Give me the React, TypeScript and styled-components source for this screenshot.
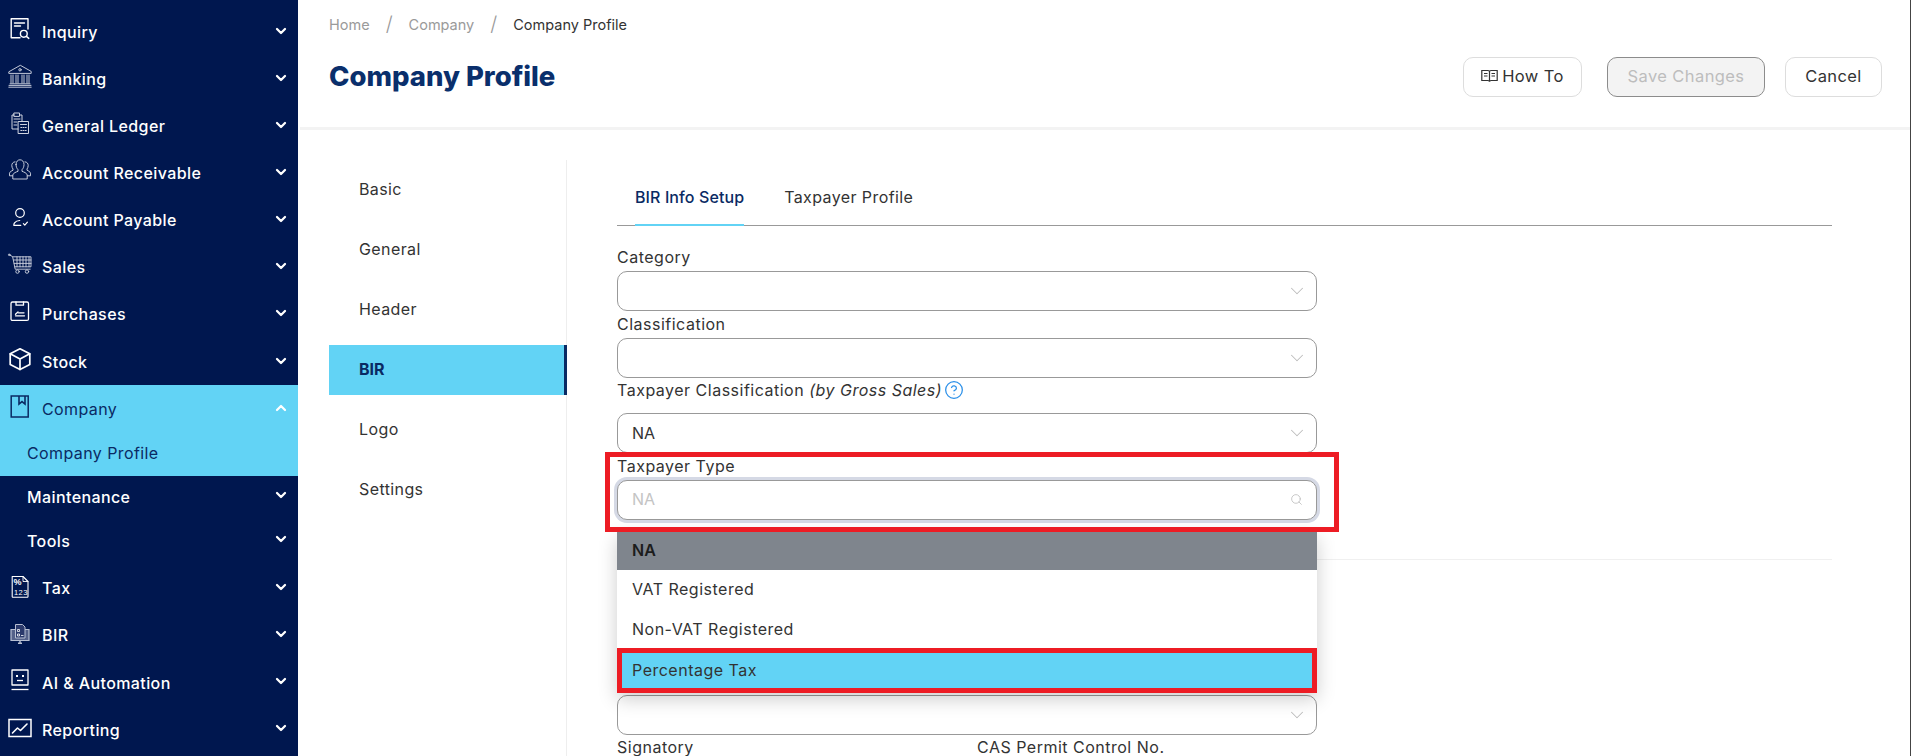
import { ReactNode } from 'react';
import styled, { createGlobalStyle } from 'styled-components';
import { ChevronDown, ChevronUp, CircleHelp, Search } from 'lucide-react';

const GlobalStyle = createGlobalStyle`
  html, body {
    margin: 0;
    padding: 0;
    background: #fff;
    font-family: Inter, 'Noto Sans', sans-serif;
    color: #333;
  }
`;

const Shell = styled.div`
  display: flex;
  width: 1912px;
  height: 756px;
  overflow: hidden;
`;

const Sidebar = styled.nav`
  flex: 0 0 298px;
  padding-top: 8px;
  background: #00174f;
`;

const MenuRow = styled.div<{ $active?: boolean }>`
  display: flex;
  align-items: center;
  height: 47px;
  padding: 0 9px 0 8px;
  background: ${(p) => (p.$active ? '#62d3f5' : 'transparent')};
  color: ${(p) => (p.$active ? '#0a2a63' : '#fff')};
  font-size: 16px;
  font-weight: ${(p) => (p.$active ? 400 : 500)};
  letter-spacing: 0.4px;
`;

const SubRow = styled.div<{ $active?: boolean }>`
  display: flex;
  align-items: center;
  box-sizing: border-box;
  height: 44px;
  padding: 0 9px 4px 27px;
  background: ${(p) => (p.$active ? '#62d3f5' : 'transparent')};
  color: ${(p) => (p.$active ? '#0a2a63' : '#fff')};
  font-size: 16px;
  font-weight: ${(p) => (p.$active ? 400 : 500)};
  letter-spacing: 0.4px;
`;

const TopMenu = styled.div`
  ${MenuRow}:last-child {
    margin-top: 1px;
  }
`;

const BottomMenu = styled.div`
  ${MenuRow} {
    height: 47.25px;
  }
`;

const IconSlot = styled.span`
  flex: 0 0 24px;
  width: 24px;
  height: 24px;
  margin: 0 10px 4px 0;

  svg {
    display: block;
  }
`;

const MenuLabel = styled.span`
  flex: 1;
  line-height: 1;
  padding-top: 1px;
`;

const Chevron = styled.span`
  display: flex;
  color: #fff;
  margin-bottom: 2px;
`;

const Main = styled.main`
  flex: 1;
  min-width: 0;
  margin: 0 1px 0 2px;
  border-right: 1px solid #444;
`;

const Header = styled.header`
  display: flex;
  justify-content: space-between;
  box-sizing: border-box;
  height: 130px;
  padding: 0 28px 0 29px;
  border-bottom: 3px solid #f3f3f3;
`;

const Breadcrumb = styled.div`
  display: flex;
  align-items: center;
  height: 16px;
  margin-top: 16px;
  font-size: 14.5px;
`;

const Crumb = styled.span<{ $current?: boolean }>`
  color: ${(p) => (p.$current ? '#333' : '#9a9a9a')};
`;

const CrumbSlash = styled.span`
  margin: 0 16px;
  color: #999;
  font-size: 20px;
  font-weight: 300;
`;

const Title = styled.h1`
  margin: 27px 0 0;
  color: #0a2f6c;
  font-size: 27.5px;
  line-height: 34px;
  font-weight: 800;
`;

const Actions = styled.div`
  display: flex;
  margin-top: 57px;
`;

const Button = styled.button<{ $disabled?: boolean }>`
  display: flex;
  align-items: center;
  justify-content: center;
  gap: 4px;
  box-sizing: border-box;
  height: 40px;
  padding: 0 0 2px;
  border: 1px solid ${(p) => (p.$disabled ? '#8c8c8c' : '#ddd')};
  border-radius: 10px;
  background: ${(p) => (p.$disabled ? '#f3f3f3' : '#fff')};
  color: ${(p) => (p.$disabled ? '#bdbdbd' : '#333')};
  font-family: inherit;
  font-size: 16.5px;
  letter-spacing: 0.4px;
`;

const HowToButton = styled(Button)`
  width: 119px;
  margin-right: 25px;
`;

const SaveButton = styled(Button)`
  width: 158px;
  margin-right: 20px;
`;

const CancelButton = styled(Button)`
  width: 97px;
`;

const Body = styled.div`
  display: flex;
  padding: 30px 0 0 29px;
`;

const SideNav = styled.div`
  display: flex;
  flex-direction: column;
  gap: 10px;
  flex: 0 0 238px;
  box-sizing: border-box;
  height: 600px;
  padding-top: 5px;
  border-right: 1px solid #eee;
`;

const SideItem = styled.div<{ $active?: boolean }>`
  display: flex;
  align-items: center;
  box-sizing: border-box;
  height: 50px;
  margin-right: ${(p) => (p.$active ? '-1px' : '0')};
  padding: 0 0 2px 30px;
  background: ${(p) => (p.$active ? '#62d3f5' : 'transparent')};
  border-right: ${(p) => (p.$active ? '3px solid #0a2a63' : '0')};
  color: ${(p) => (p.$active ? '#0a2a63' : '#333')};
  font-size: 16px;
  letter-spacing: ${(p) => (p.$active ? 0 : 0.4)}px;
  font-weight: ${(p) => (p.$active ? 700 : 400)};
`;

const Content = styled.div`
  flex: 0 0 1215px;
  margin-left: 50px;
`;

const Tabs = styled.div`
  display: flex;
  gap: 40px;
  box-sizing: border-box;
  height: 66px;
  padding: 26px 0 0 18px;
  border-bottom: 1px solid #999;
`;

const Tab = styled.div<{ $active?: boolean }>`
  box-sizing: border-box;
  height: 40px;
  line-height: 23px;
  font-size: 16px;
  letter-spacing: ${(p) => (p.$active ? 0.1 : 0.4)}px;
  font-weight: ${(p) => (p.$active ? 500 : 400)};
  color: ${(p) => (p.$active ? '#0a2a63' : '#333')};
  border-bottom: ${(p) => (p.$active ? '2px solid #62d3f5' : '0')};
`;

const Form = styled.div`
  padding-top: 18px;
`;

const Field = styled.div`
  position: relative;
  width: 700px;
`;

const Label = styled.label<{ $tall?: boolean }>`
  display: flex;
  align-items: flex-start;
  gap: 2px;
  height: ${(p) => (p.$tall ? 35 : 27)}px;
  line-height: ${(p) => (p.$tall ? 25 : 27)}px;
  font-size: 16px;
  letter-spacing: 0.5px;
  color: #333;

  em {
    font-style: italic;
  }

  svg {
    margin-top: 2px;
    color: #2a8fe8;
  }
`;

const BottomLabel = styled.label`
  display: block;
  height: 18px;
  margin-top: 3px;
  line-height: 18px;
  font-size: 16px;
  letter-spacing: 0.5px;
  color: #333;
`;

const SelectBox = styled.div<{ $focused?: boolean }>`
  display: flex;
  align-items: center;
  justify-content: space-between;
  box-sizing: border-box;
  height: 40px;
  padding: 0 14px ${(p) => (p.$focused ? 2 : 0)}px;
  border: 1px solid #999;
  border-radius: 10px;
  background: #fff;
  font-size: 16px;
  color: ${(p) => (p.$focused ? '#c4c4c4' : '#333')};
  box-shadow: ${(p) => (p.$focused ? '0 0 0 3px #d5d9e5' : 'none')};

  svg {
    color: #bdbdbd;
    margin-right: ${(p) => (p.$focused ? -1 : -6)}px;
  }
`;

const Divider = styled.div`
  height: 1px;
  margin-top: 39px;
  background: #f0f0f0;
`;

const LowerSelect = styled(Field)`
  margin-top: 135px;
`;

const LabelRow = styled.div`
  display: grid;
  grid-template-columns: 360px 360px;
`;

const HighlightFrame = styled.div`
  position: absolute;
  top: -1px;
  right: -22px;
  bottom: -12px;
  left: -12px;
  border: 5px solid #ed1c24;
  pointer-events: none;
  z-index: 3;
`;

const Dropdown = styled.div`
  position: absolute;
  top: calc(100% + 12px);
  left: 0;
  right: 0;
  z-index: 2;
  background: #fff;
  box-shadow: 0 6px 18px rgba(0, 0, 0, 0.2);
`;

const Option = styled.div<{ $selected?: boolean; $marked?: boolean }>`
  display: flex;
  align-items: center;
  box-sizing: border-box;
  height: ${(p) => (p.$selected ? 38 : p.$marked ? 45 : 40)}px;
  margin-top: ${(p) => (p.$marked ? -2 : 0)}px;
  padding: 0 0 2px ${(p) => (p.$marked ? 10 : 15)}px;
  background: ${(p) => (p.$selected ? '#7f858d' : p.$marked ? '#62d3f5' : '#fff')};
  border: ${(p) => (p.$marked ? '5px solid #ed1c24' : '0')};
  color: ${(p) => (p.$selected ? '#1c1c1c' : '#333')};
  font-size: 16px;
  letter-spacing: ${(p) => (p.$selected ? 0 : 0.5)}px;
  font-weight: ${(p) => (p.$selected ? 600 : 400)};
`;

const line = { fill: 'none', stroke: 'currentColor', strokeLinecap: 'round', strokeLinejoin: 'round' } as const;

const Svg = ({ children, color = '#fff' }: { children: ReactNode; color?: string }) => (
  <svg width="24" height="24" viewBox="0 0 24 24" style={{ color, overflow: 'visible' }}>
    {children}
  </svg>
);

const icons: Record<string, ReactNode> = {
  inquiry: (
    <Svg>
      <g {...line} strokeWidth="1.4">
        <path d="M20 11V.8H3.2v19h8.8" />
        <path d="M6.5 5h10M6.5 8h6" />
        <circle cx="15.8" cy="15.8" r="3.4" />
        <path d="M18.4 18.4l2.4 2" />
      </g>
    </Svg>
  ),
  banking: (
    <Svg color="#d8dce6">
      <g {...line} strokeWidth="0.9">
        <path d="M12 .5L.8 6.8v1.6h22.4V6.8z" />
        <circle cx="12" cy="4.8" r="1.2" />
        <path d="M3 10v8M5 10v8M8 10v8M10 10v8M14 10v8M16 10v8M19 10v8M21 10v8" />
        <path d="M2 18.8h20M1 20.4h22M.8 22.2h22.4" />
      </g>
    </Svg>
  ),
  ledger: (
    <Svg color="#cfd4e0">
      <g {...line} strokeWidth="1">
        <path d="M10 17H4V3h2.2M11.5 3H14v6" />
        <rect x="6.2" y="1" width="5.3" height="3.4" />
        <path d="M6 7h6M6 10h3M6 13h3" />
        <rect x="10.5" y="9.5" width="10" height="12" />
        <path d="M12.5 12.5h6M12.8 15.5h1M15 15.5h1M17.2 15.5h1M12.8 18.5h1M15 18.5h1M17.2 18.5h1" />
      </g>
    </Svg>
  ),
  receivable: (
    <Svg color="#d8dce6">
      <g {...line} strokeWidth="0.9">
        <path d="M8 5.5C8 2.5 9.8.8 12 .8s4 1.7 4 4.7c0 2.4-1 4.2-2 5.2v1.6c2 .8 4.6 1.6 5.2 3.6V20H4.8v-4.1c.6-2 3.2-2.8 5.2-3.6v-1.6C9 9.7 8 7.9 8 5.5z" />
        <path d="M7 2.8C4.8 3 3.8 4.6 3.8 6.6c0 1.4.6 2.6 1.2 3.4v1.2C3.6 12 1.8 12.6 1.5 14.2v2.6h3M17 2.8c2.2.2 3.2 1.8 3.2 3.8 0 1.4-.6 2.6-1.2 3.4v1.2c1.4.8 3.2 1.4 3.5 3v2.6h-3" />
      </g>
    </Svg>
  ),
  payable: (
    <Svg>
      <g {...line} strokeWidth="1.2">
        <circle cx="12" cy="7" r="4.3" />
        <path d="M5.8 19.3c0-1 .1-1.6.7-2.4 1.2-1.6 3-2.4 5.2-2.4M5.8 19.3h7" />
        <path d="M15.4 17.6l1.4 1.5 2.6-3" />
      </g>
    </Svg>
  ),
  sales: (
    <Svg color="#cfd4e0">
      <g {...line} strokeWidth="0.9">
        <circle cx="1.2" cy="1.8" r="0.8" />
        <path d="M2 2.2l2.6 1.4 2.6 12.6h15" />
        <path d="M5 3.8h18v10H6.8M9 3.8v10M12 3.8v10M15 3.8v10M18 3.8v10M21 3.8v10M5.6 7h17.4M6.2 10.4h16.8" />
        <circle cx="9.5" cy="18.6" r="1.7" />
        <circle cx="19" cy="18.6" r="1.7" />
      </g>
    </Svg>
  ),
  purchases: (
    <Svg>
      <g {...line} strokeWidth="1.3">
        <rect x="3" y="2" width="17.5" height="18.4" rx="1.5" />
        <path d="M8 2v3.2h7.5V2" />
        <path d="M7.5 15.8h9M10.5 12.8H16" />
        <path d="M7.5 14.2l2.5-2.2" />
      </g>
    </Svg>
  ),
  stock: (
    <Svg>
      <g {...line} strokeWidth="1.7">
        <path d="M12 .8l9.8 5v10.8L12 21.4 2.2 16.6V5.8z" />
        <path d="M2.2 5.8L12 11l9.8-5.2M12 11v10.4" />
      </g>
    </Svg>
  ),
  company: (
    <Svg color="#0a2a63">
      <rect x="3.2" y="1" width="17" height="21" fill="none" stroke="currentColor" strokeWidth="1.5" />
      <path d="M11 1v8l3-2.4 3 2.4V1" fill="none" stroke="currentColor" strokeWidth="1.6" />
    </Svg>
  ),
  tax: (
    <Svg>
      <path d="M4.2 2.5h10.800l5 5v15a.8.8 0 0 1-.8.8H5a.8.8 0 0 1-.8-.8z" {...line} strokeWidth="1.1" />
      <path d="M15 2.5v5h5" {...line} strokeWidth="0.9" />
      <text x="5.5" y="11" fontSize="9" fontFamily="Liberation Sans, sans-serif" fontWeight="700" fill="currentColor">%</text>
      <text x="6" y="20.5" fontSize="7.5" fontFamily="Liberation Sans, sans-serif" fill="currentColor">123</text>
    </Svg>
  ),
  bir: (
    <Svg color="#b7bfd2">
      <path d="M3 8.5h18v11H3z" fill="#55628a" stroke="currentColor" strokeWidth="1.2" />
      <path d="M7.5 3.5h7l2.5 2.5v11h-9.500z" fill="#2b3a6c" stroke="currentColor" strokeWidth="1" />
      <path d="M9.5 8.5h2v2h-2zM9.5 13h2v2h-2zM13 14.5h2.500" fill="none" stroke="#fff" strokeWidth="0.8" />
      <path d="M10 22.2h4M12 19.5v2.500" stroke="currentColor" strokeWidth="1.4" />
    </Svg>
  ),
  automation: (
    <Svg>
      <g {...line} strokeWidth="1.3" strokeLinecap="butt">
        <rect x="4" y="2" width="16" height="15" />
        <path d="M3.5 21.5h17" />
        <path d="M9 12.5h6" />
      </g>
      <rect x="8" y="7" width="2" height="2" fill="currentColor" />
      <rect x="14" y="7" width="2" height="2" fill="currentColor" />
    </Svg>
  ),
  reporting: (
    <Svg>
      <rect x="1" y="4.5" width="22" height="17" fill="none" stroke="currentColor" strokeWidth="1.5" />
      <path d="M4.5 18l5-5 3 2.5 6.5-6.5" {...line} strokeWidth="1.6" />
    </Svg>
  ),
};

const BookIcon = () => (
  <svg width="17" height="16" viewBox="0 0 17 16" fill="none" stroke="#333" strokeWidth="1.2">
    <path d="M.8 2.5H7c.8 0 1.5.6 1.5 1.4 0-.8.7-1.4 1.5-1.400h6.200v10H10c-.8 0-1.500.4-1.500 1 0-.6-.7-1-1.500-1H.8z" />
    <path d="M8.5 3.900v9.600M3 5.500h3.500M3 8h3.500M10.500 5.500H14M10.500 8H14" />
  </svg>
);

const MenuChevron = ({ up }: { up?: boolean }) => (
  <Chevron>{up ? <ChevronUp size={16} strokeWidth={3.4} /> : <ChevronDown size={16} strokeWidth={3.4} />}</Chevron>
);

type MenuItemProps = { icon: string; label: string; active?: boolean; open?: boolean };

const MenuItem = ({ icon, label, active, open }: MenuItemProps) => (
  <MenuRow $active={active}>
    <IconSlot>{icons[icon]}</IconSlot>
    <MenuLabel>{label}</MenuLabel>
    <MenuChevron up={open} />
  </MenuRow>
);

const SelectField = ({ value }: { value?: string }) => (
  <SelectBox>
    <span>{value}</span>
    <ChevronDown size={22} strokeWidth={1.1} />
  </SelectBox>
);

const topMenu = [
  { icon: 'inquiry', label: 'Inquiry' },
  { icon: 'banking', label: 'Banking' },
  { icon: 'ledger', label: 'General Ledger' },
  { icon: 'receivable', label: 'Account Receivable' },
  { icon: 'payable', label: 'Account Payable' },
  { icon: 'sales', label: 'Sales' },
  { icon: 'purchases', label: 'Purchases' },
  { icon: 'stock', label: 'Stock' },
];

const bottomMenu = [
  { icon: 'tax', label: 'Tax' },
  { icon: 'bir', label: 'BIR' },
  { icon: 'automation', label: 'AI & Automation' },
  { icon: 'reporting', label: 'Reporting' },
];

const sections = ['Basic', 'General', 'Header', 'BIR', 'Logo', 'Settings'];

export default function App() {
  return (
    <>
      <GlobalStyle />
      <Shell>
        <Sidebar>
          <TopMenu>
            {topMenu.map((m) => (
              <MenuItem key={m.label} {...m} />
            ))}
          </TopMenu>
          <MenuItem icon="company" label="Company" active open />
          <SubRow $active>
            <MenuLabel>Company Profile</MenuLabel>
          </SubRow>
          <SubRow>
            <MenuLabel>Maintenance</MenuLabel>
            <MenuChevron />
          </SubRow>
          <SubRow>
            <MenuLabel>Tools</MenuLabel>
            <MenuChevron />
          </SubRow>
          <BottomMenu>
            {bottomMenu.map((m) => (
              <MenuItem key={m.label} {...m} />
            ))}
          </BottomMenu>
        </Sidebar>

        <Main>
          <Header>
            <div>
              <Breadcrumb>
                <Crumb>Home</Crumb>
                <CrumbSlash>/</CrumbSlash>
                <Crumb>Company</Crumb>
                <CrumbSlash>/</CrumbSlash>
                <Crumb $current>Company Profile</Crumb>
              </Breadcrumb>
              <Title>Company Profile</Title>
            </div>
            <Actions>
              <HowToButton>
                <BookIcon />
                How To
              </HowToButton>
              <SaveButton $disabled>Save Changes</SaveButton>
              <CancelButton>Cancel</CancelButton>
            </Actions>
          </Header>

          <Body>
            <SideNav>
              {sections.map((s) => (
                <SideItem key={s} $active={s === 'BIR'}>
                  {s}
                </SideItem>
              ))}
            </SideNav>

            <Content>
              <Tabs>
                <Tab $active>BIR Info Setup</Tab>
                <Tab>Taxpayer Profile</Tab>
              </Tabs>

              <Form>
                <Field>
                  <Label>Category</Label>
                  <SelectField />
                </Field>
                <Field>
                  <Label>Classification</Label>
                  <SelectField />
                </Field>
                <Field>
                  <Label $tall>
                    <span>
                      Taxpayer Classification <em>(by Gross Sales)</em>
                    </span>
                    <CircleHelp size={20} strokeWidth={1.5} />
                  </Label>
                  <SelectField value="NA" />
                </Field>
                <Field>
                  <Label>Taxpayer Type</Label>
                  <SelectBox $focused>
                    <span>NA</span>
                    <Search size={13} strokeWidth={1.5} />
                  </SelectBox>
                  <HighlightFrame />
                  <Dropdown>
                    <Option $selected>NA</Option>
                    <Option>VAT Registered</Option>
                    <Option>Non-VAT Registered</Option>
                    <Option $marked>Percentage Tax</Option>
                  </Dropdown>
                </Field>
                <Divider />
                <LowerSelect>
                  <SelectField />
                </LowerSelect>
                <LabelRow>
                  <BottomLabel>Signatory</BottomLabel>
                  <BottomLabel>CAS Permit Control No.</BottomLabel>
                </LabelRow>
              </Form>
            </Content>
          </Body>
        </Main>
      </Shell>
    </>
  );
}
